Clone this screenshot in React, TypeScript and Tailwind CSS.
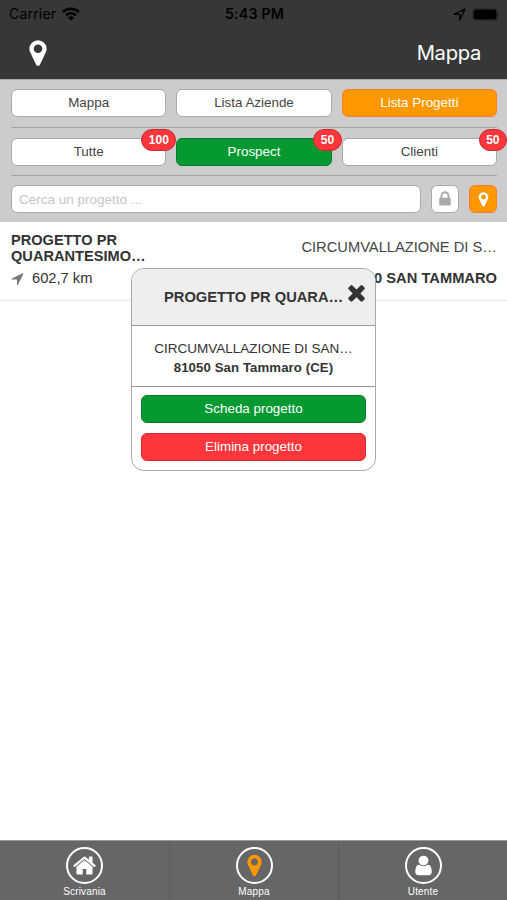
import React from 'react';

const icons = {
  marker:
    'M1152 640q0-106-75-181t-181-75-181 75-75 181 75 181 181 75 181-75 75-181zm256 0q0 109-33 179l-364 774q-16 33-47.5 52t-67.5 19-67.5-19-46.5-52l-365-774q-33-70-33-179 0-212 150-362t362-150 362 150 150 362z',
  home: 'M1472 992v480q0 26-19 45t-45 19h-384v-384h-256v384h-384q-26 0-45-19t-19-45v-480q0-1 .5-3t.5-3l575-474 575 474q1 2 1 6zm223-69l-62 74q-8 9-21 11h-3q-13 0-21-7l-692-577-692 577q-12 8-24 7-13-2-21-11l-62-74q-8-10-7-23.5t11-21.5l719-599q32-26 76-26t76 26l244 204v-195q0-14 9-23t23-9h192q14 0 23 9t9 23v408l219 182q10 8 11 21.5t-7 23.5z',
  user: 'M1536 1399q0 109-62.5 187t-150.5 78h-854q-88 0-150.5-78t-62.5-187q0-85 8.5-160.5t31.5-152 58.5-131 94-89 134.5-34.5q131 128 313 128t313-128q76 0 134.5 34.5t94 89 58.5 131 31.5 152 8.5 160.5zm-256-887q0 159-112.5 271.5t-271.5 112.5-271.5-112.5-112.5-271.5 112.5-271.5 271.5-112.5 271.5 112.5 112.5 271.5z',
  lock: 'M640 768h512v-192q0-106-75-181t-181-75-181 75-75 181v192zm832 96v576q0 40-28 68t-68 28h-960q-40 0-68-28t-28-68v-576q0-40 28-68t68-28h32v-192q0-184 132-316t316-132 316 132 132 316v192h32q40 0 68 28t28 68z',
  close:
    'M1490 1322q0 40-28 68l-136 136q-28 28-68 28t-68-28l-294-294-294 294q-28 28-68 28t-68-28l-136-136q-28-28-28-68t28-68l294-294-294-294q-28-28-28-68t28-68l136-136q28-28 68-28t68 28l294 294 294-294q28-28 68-28t68 28l136 136q28 28 28 68t-28 68l-294 294 294 294q28 28 28 68z',
  arrow:
    'M1593 349l-640 1280q-17 35-57 35-5 0-15-2-22-5-35.5-22.5t-13.5-39.5v-576h-576q-22 0-39.5-13.5t-22.5-35.5 4-42 29-30l1280-640q13-7 29-7 27 0 45 19 15 14 18.5 34.5t-6.5 39.5z',
};

interface IconProps {
  name: keyof typeof icons;
  size: number;
  className?: string;
}

const Icon: React.FC<IconProps> = ({ name, size, className }) => (
  <svg width={size} height={size} viewBox="0 0 1792 1792" fill="currentColor" className={className}>
    <path d={icons[name]} />
  </svg>
);

const tones = {
  white: 'bg-white border-[#a9a9a9] text-[#444]',
  orange: 'bg-[#ff9800] border-[#ff7b2e] text-white',
  green: 'bg-[#059a31] border-[#087c2a] text-white',
  red: 'bg-[#ff363c] border-[#d9282e] text-white',
};

interface ButtonProps {
  label: string;
  tone?: keyof typeof tones;
  badge?: number;
}

const Button: React.FC<ButtonProps> = ({ label, tone = 'white', badge }) => (
  <button
    className={`relative h-7 w-full rounded-md border text-[13.4px] leading-none ${tones[tone]}`}
  >
    {label}
    {badge && (
      <span className="absolute -right-[11px] -top-[10px] flex h-[22px] items-center rounded-full border border-[#c92a2f] bg-[#ff363c] px-[6.5px] text-xs font-bold text-white">
        {badge}
      </span>
    )}
  </button>
);

const StatusBar = () => (
  <div className="grid h-7 grid-cols-3 items-center pl-[9px] pr-[7px] font-[Inter,sans-serif] text-[14.2px] text-black">
    <div className="flex items-center gap-[6px]">
      <span className="tracking-[0.1px]">Carrier</span>
      <svg width="18" height="14" viewBox="0 0 18 14" fill="none" stroke="currentColor" strokeWidth="2.5">
        <path d="M1 5a11.3 11.3 0 0 1 16 0M4 8.3a7 7 0 0 1 10 0" />
        <path d="M6 10.6a4.2 4.2 0 0 1 6 0L9 13.8z" fill="currentColor" stroke="none" />
      </svg>
    </div>
    <span className="text-center font-semibold tracking-[0.2px]">5:43 PM</span>
    <div className="flex items-center justify-end gap-[6px]">
      <svg width="13" height="13" viewBox="0 0 12 12" fill="none" stroke="currentColor" strokeWidth="1.2">
        <path d="M1 5.8 11 1 6.3 11V5.8z" strokeLinejoin="round" />
      </svg>
      <svg width="28" height="13" viewBox="0 0 28 13">
        <rect x=".5" y=".5" width="25" height="12" rx="3.5" fill="none" stroke="#2b2b2b" />
        <rect x="1.5" y="1.5" width="23" height="10" rx="2.5" />
        <path d="M26.5 4.5q2 2 0 4z" fill="#2b2b2b" />
      </svg>
    </div>
  </div>
);

const ProjectPopup = () => (
  <div className="absolute left-[131px] top-[268px] h-[203px] w-[245px] overflow-hidden rounded-[13px] border-[1.5px] border-[#a8a8a8] bg-white text-center">
    <div className="relative h-[57px] border-b border-[#999] bg-[#eee] pl-8 pt-[19px] text-left text-[14.7px] font-bold leading-[18px]">
      PROGETTO PR QUARA…
      <Icon name="close" size={25} className="absolute right-[6px] top-[11px] text-[#333]" />
    </div>
    <div className="h-[61px] border-b border-[#999] pt-[13px] leading-[19px]">
      <p className="text-[13.5px]">CIRCUMVALLAZIONE DI SAN…</p>
      <p className="text-[13.2px] font-bold tracking-[0.1px]">81050 San Tammaro (CE)</p>
    </div>
    <div className="flex flex-col gap-[10px] px-[9px] pt-[8px]">
      <Button label="Scheda progetto" tone="green" />
      <Button label="Elimina progetto" tone="red" />
    </div>
  </div>
);

const tabs: { label: string; icon: keyof typeof icons; size: number; active?: boolean }[] = [
  { label: 'Scrivania', icon: 'home', size: 25 },
  { label: 'Mappa', icon: 'marker', size: 25, active: true },
  { label: 'Utente', icon: 'user', size: 23 },
];

const App: React.FC = () => {
  return (
    <div className="relative flex h-[900px] w-[507px] flex-col overflow-hidden bg-white font-['Liberation_Sans',Arial,sans-serif] text-[#333]">
      <header className="h-[79px] shrink-0 bg-[#373737] text-white">
        <StatusBar />
        <div className="flex h-[49px] items-center justify-between pl-[23px] pr-[26px]">
          <Icon name="marker" size={30} />
          <h1 className="pt-0.5 font-[Inter,sans-serif] text-[20.2px] tracking-[-0.3px]">Mappa</h1>
        </div>
      </header>

      <section className="h-[143px] shrink-0 border-t border-[#aaa] bg-[#ccc] pl-[11px] pr-[10px] pt-[9px]">
        <div className="grid grid-cols-3 gap-[10px]">
          <Button label="Mappa" />
          <Button label="Lista Aziende" />
          <Button label="Lista Progetti" tone="orange" />
        </div>
        <div className="my-[10px] h-px bg-[#a5a5a5]" />
        <div className="grid grid-cols-3 gap-[10px]">
          <Button label="Tutte" badge={100} />
          <Button label="Prospect" tone="green" badge={50} />
          <Button label="Clienti" badge={50} />
        </div>
        <div className="mb-[9px] mt-[9px] h-px bg-[#a5a5a5]" />
        <div className="flex gap-[10px]">
          <input
            className="h-7 min-w-0 flex-1 rounded-md border border-[#a9a9a9] bg-white px-[7px] text-[13.5px] placeholder:text-[#c7c7c7]"
            placeholder="Cerca un progetto ..."
          />
          <button className="flex size-7 items-center justify-center rounded-md border border-[#a9a9a9] bg-white text-[#aaa]">
            <Icon name="lock" size={18} />
          </button>
          <button className="flex size-7 items-center justify-center rounded-md border border-[#ff7b2e] bg-[#ff9800] text-white">
            <Icon name="marker" size={17} />
          </button>
        </div>
      </section>

      <main className="flex-1">
        <div className="flex h-[79px] justify-between border-b border-[#e5e5e5] pl-[11px] pr-[10px]">
          <div className="pt-[10px]">
            <p className="w-[150px] text-[14.6px] font-bold leading-4">PROGETTO PR QUARANTESIMO…</p>
            <div className="mt-[5px] flex items-center gap-[7px] text-[14.7px] leading-[18px]">
              <Icon name="arrow" size={15} className="-ml-px text-[#777]" />
              602,7 km
            </div>
          </div>
          <div className="pt-4 text-right text-[14.7px] leading-[18px]">
            <p className="text-[#444]">CIRCUMVALLAZIONE DI S…</p>
            <p className="mt-[13px] font-bold">81050 SAN TAMMARO</p>
          </div>
        </div>
      </main>

      <nav className="grid h-[60px] shrink-0 grid-cols-3 border-t border-[#999] bg-[#666] text-white">
        {tabs.map((tab) => (
          <div
            key={tab.label}
            className="flex flex-col items-center border-l border-[#5e5e5e] pt-[6px] first:border-l-0"
          >
            <div className="flex size-[37px] items-center justify-center rounded-full border-2 border-white">
              <Icon
                name={tab.icon}
                size={tab.size}
                className={tab.active ? 'text-[#ff9800]' : 'text-white'}
              />
            </div>
            <span className="mt-[2px] text-[10px] leading-3 tracking-[0.15px]">{tab.label}</span>
          </div>
        ))}
      </nav>

      <ProjectPopup />
    </div>
  );
};

export default App;
